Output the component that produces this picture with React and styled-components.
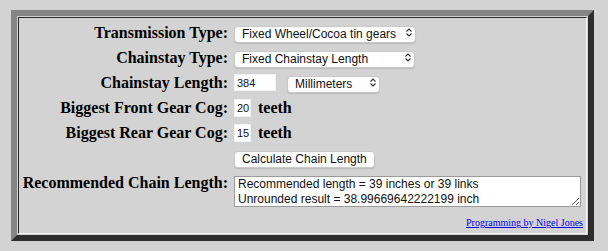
import React from 'react';
import styled, { createGlobalStyle } from 'styled-components';

const GlobalStyle = createGlobalStyle`
  html, body {
    margin: 0;
    padding: 0;
    background: #d3d3d3;
  }
`;

export default function App () {
  return (
    <>
      <GlobalStyle />
      <Page>
        <Panel>
          <Cell>
            <Form>
              <Row>
                <Label>Transmission Type:</Label>
                <Field>
                  <Dropdown width={182} value="Fixed Wheel/Cocoa tin gears" />
                </Field>
              </Row>
              <Row>
                <Label>Chainstay Type:</Label>
                <Field>
                  <Dropdown width={181} value="Fixed Chainstay Length" />
                </Field>
              </Row>
              <Row>
                <Label>Chainstay Length:</Label>
                <Field>
                  <NumberInput width={42} defaultValue="384" />
                  <Spacer />
                  <Dropdown width={93} value="Millimeters" />
                </Field>
              </Row>
              <Row>
                <Label>Biggest Front Gear Cog:</Label>
                <Field>
                  <NumberInput width={17} tall defaultValue="20" />
                  <Unit>teeth</Unit>
                </Field>
              </Row>
              <Row>
                <Label>Biggest Rear Gear Cog:</Label>
                <Field>
                  <NumberInput width={17} tall defaultValue="15" />
                  <Unit>teeth</Unit>
                </Field>
              </Row>
              <Row height={28}>
                <Label />
                <Field>
                  <Button type="button">Calculate Chain Length</Button>
                </Field>
              </Row>
              <ResultRow>
                <ResultLabel>Recommended Chain Length:</ResultLabel>
                <Result
                  readOnly
                  defaultValue={'Recommended length = 39 inches or 39 links\nUnrounded result = 38.99669642222199 inch'}
                />
              </ResultRow>
            </Form>
            <Credit>
              <a href="#">Programming by Nigel Jones</a>
            </Credit>
          </Cell>
        </Panel>
      </Page>
    </>
  );
}

function Dropdown ({ width, value }) {
  return (
    <SelectBox width={width}>
      <Select defaultValue={value}>
        <option>{value}</option>
      </Select>
      <Chevrons viewBox="0 0 6 9" width="6" height="9">
        <path d="M0.5 3.5 L3 1 L5.5 3.5" />
        <path d="M0.5 5.5 L3 8 L5.5 5.5" />
      </Chevrons>
    </SelectBox>
  );
}

const Page = styled.div`
  padding: 10px 0 0 11px;
`;

const Panel = styled.div`
  box-sizing: border-box;
  width: 583px;
  padding: 1px;
  border: 6px solid;
  border-color: #858585 #2d2d2d #2d2d2d #858585;
`;

const Cell = styled.div`
  border: 1px solid;
  border-color: #2a2a2a #f4f4f4 #f4f4f4 #2a2a2a;
  padding: 2px 2px 4px 0;
`;

const Form = styled.div`
  display: flex;
  flex-direction: column;
`;

const Row = styled.div`
  display: grid;
  grid-template-columns: 209px 1fr;
  column-gap: 6px;
  align-items: center;
  height: ${p => p.height || 25}px;
`;

const ResultRow = styled(Row)`
  align-items: start;
  height: auto;
`;

const Label = styled.div`
  text-align: right;
  font-family: "Liberation Serif", "Times New Roman", serif;
  font-weight: bold;
  font-size: 16px;
  line-height: 18px;
  color: #000;
  white-space: nowrap;
`;

const ResultLabel = styled(Label)`
  margin-top: 1px;
`;

const Field = styled.div`
  display: flex;
  align-items: center;
`;

const Spacer = styled.div`
  width: 11px;
`;

const SelectBox = styled.div`
  position: relative;
  width: ${p => p.width}px;
  height: 17px;
`;

const Select = styled.select`
  appearance: none;
  box-sizing: border-box;
  width: 100%;
  height: 100%;
  margin: 0;
  padding: 0 0 0 7px;
  border: 1px solid #c9c9c9;
  border-radius: 4px;
  background: #fff;
  box-shadow: 0 1px 1px rgba(0, 0, 0, 0.12);
  font-family: "Liberation Sans", Arial, sans-serif;
  font-size: 12px;
  color: #111;
  outline: none;
`;

const Chevrons = styled.svg`
  position: absolute;
  right: 4px;
  top: 4px;
  fill: none;
  stroke: #333;
  stroke-width: 1.1;
  pointer-events: none;
`;

const NumberInput = styled.input`
  box-sizing: border-box;
  width: ${p => p.width}px;
  height: ${p => (p.tall ? 18 : 17)}px;
  margin: 0;
  padding: 0 0 0 2px;
  border: 1px solid #f2f2f2;
  background: #fff;
  font-family: "Liberation Sans", Arial, sans-serif;
  font-size: 11px;
  color: #111;
  outline: none;
`;

const Unit = styled.span`
  margin-left: 7px;
  font-family: "Liberation Serif", "Times New Roman", serif;
  font-weight: bold;
  font-size: 16px;
  color: #000;
`;

const Button = styled.button`
  box-sizing: border-box;
  height: 17px;
  margin: 0;
  padding: 0 7px;
  border: 1px solid #c9c9c9;
  border-radius: 4px;
  background: #fff;
  box-shadow: 0 1px 1px rgba(0, 0, 0, 0.12);
  font-family: "Liberation Sans", Arial, sans-serif;
  font-size: 12px;
  line-height: 15px;
  color: #111;
  cursor: pointer;
`;

const Result = styled.textarea`
  box-sizing: border-box;
  width: 347px;
  height: 31px;
  margin: 3px 0 0;
  padding: 0 3px;
  border: 1px solid #9a9a9a;
  background: #fff;
  font-family: "Liberation Sans", Arial, sans-serif;
  font-size: 12px;
  line-height: 15px;
  color: #111;
  overflow: hidden;
  outline: none;
`;

const Credit = styled.div`
  margin-top: 10px;
  text-align: right;
  padding-right: 1px;
  font-family: "Liberation Serif", "Times New Roman", serif;
  font-size: 10px;
  line-height: 12px;

  a {
    color: #0000ee;
  }
`;
